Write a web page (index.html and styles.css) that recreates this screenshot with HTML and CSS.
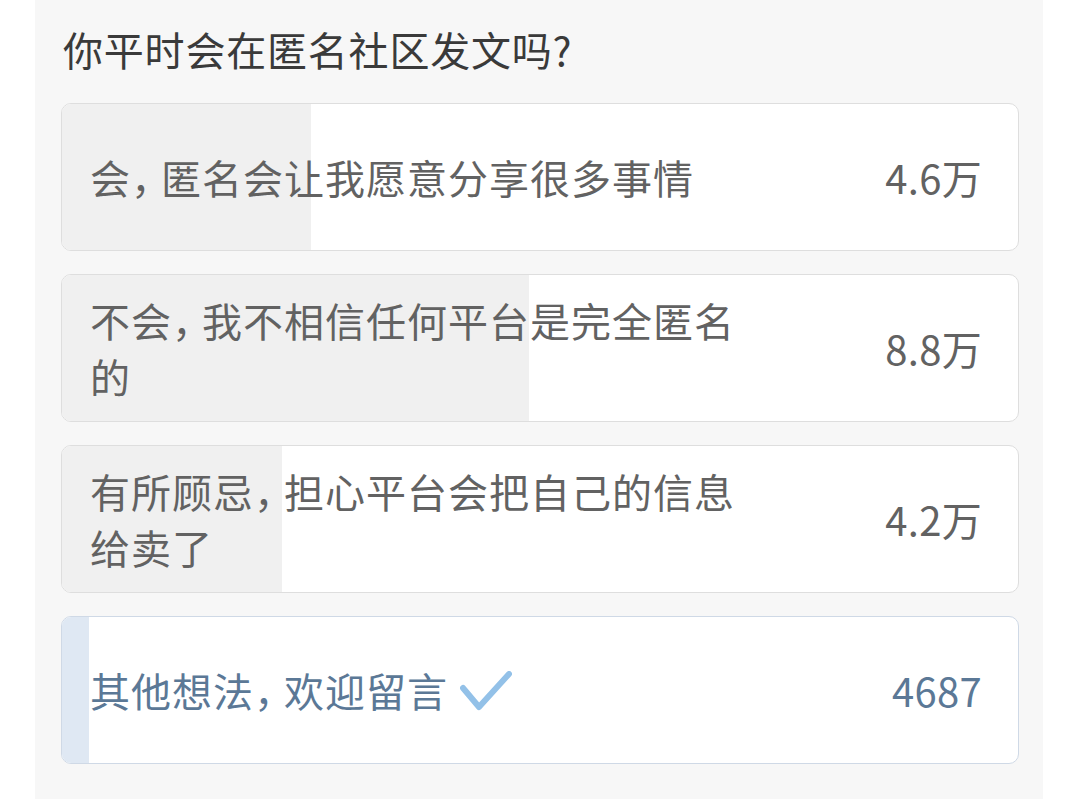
FILE: index.html
```html
<!DOCTYPE html>
<html lang="zh-CN">
<head>
<meta charset="utf-8">
<title>投票</title>
<link rel="stylesheet" href="styles.css">
</head>
<body>
<div class="card">
  <h1 class="title">你平时会在匿名社区发文吗?</h1>
  <div class="options">
    <div class="option">
      <div class="fill" style="width: 26%"></div>
      <div class="label">会<span class="comma">，</span>匿名会让我愿意分享很多事情</div>
      <div class="count">4.6万</div>
    </div>
    <div class="option">
      <div class="fill" style="width: 48.9%"></div>
      <div class="label">不会<span class="comma">，</span>我不相信任何平台是完全匿名的</div>
      <div class="count">8.8万</div>
    </div>
    <div class="option">
      <div class="fill" style="width: 23%"></div>
      <div class="label">有所顾忌<span class="comma">，</span>担心平台会把自己的信息给卖了</div>
      <div class="count">4.2万</div>
    </div>
    <div class="option selected">
      <div class="fill" style="width: 2.8%"></div>
      <div class="label">其他想法<span class="comma">，</span>欢迎留言<svg class="check" width="52" height="40" viewBox="0 0 52 40"><path d="M3 17 L19 36 L49 3" fill="none" stroke="#93c1e8" stroke-width="6" stroke-linecap="round" stroke-linejoin="round"/></svg></div>
      <div class="count">4687</div>
    </div>
  </div>
</div>
</body>
</html>
```
FILE: styles.css
```css
html, body {
  margin: 0;
  padding: 0;
  background: #ffffff;
}
body {
  font-family: "Noto Sans CJK SC", "Noto Sans", sans-serif;
  height: 799px;
  overflow: hidden;
}
.card {
  margin-left: 35px;
  width: 1008px;
  min-height: 799px;
  box-sizing: border-box;
  background: #f7f7f7;
  padding: 21px 24px 0 26px;
}
.title {
  margin: 0 0 26px 2px;
  font-size: 40px;
  line-height: 56px;
  font-weight: 400;
  color: #3a3a3a;
  letter-spacing: 0.8px;
}
.options {
  display: flex;
  flex-direction: column;
  gap: 23px;
}
.option {
  position: relative;
  overflow: hidden;
  box-sizing: border-box;
  min-height: 148px;
  background: #ffffff;
  border: 1.5px solid #dedede;
  border-radius: 10px;
  display: flex;
  align-items: center;
  justify-content: space-between;
  padding: 0 36px 0 28px;
  color: #626262;
  font-size: 40px;
  line-height: 56px;
}
.fill {
  position: absolute;
  left: 0;
  top: 0;
  bottom: 0;
  background: #f0f0f0;
}
.label, .count {
  position: relative;
}
.label {
  max-width: 660px;
  letter-spacing: 1px;
}
.comma {
  font-feature-settings: "halt";
  margin-right: 9px;
}
.count {
  letter-spacing: 0.3px;
}
.selected {
  border-color: #cfd9e6;
  color: #5b7896;
}
.selected .fill {
  background: #dfe8f3;
}
.check {
  vertical-align: -4px;
  margin-left: 12px;
}
```
